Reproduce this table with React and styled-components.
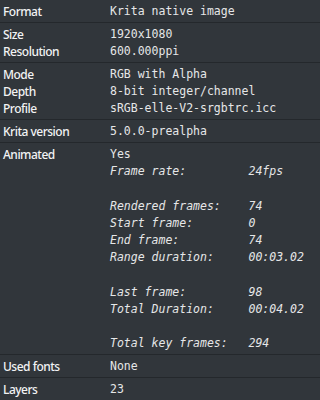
import React from "react"
import styled, { createGlobalStyle } from "styled-components"

const GlobalStyle = createGlobalStyle`
  html, body {
    margin: 0;
    padding: 0;
    background: #31363b;
  }
`

// animation details are laid out as a two-column monospace table
const animation = [
  ["Frame rate:", "24fps"],
  null,
  ["Rendered frames:", "74"],
  ["Start frame:", "0"],
  ["End frame:", "74"],
  ["Range duration:", "00:03.02"],
  null,
  ["Last frame:", "98"],
  ["Total Duration:", "00:04.02"],
  null,
  ["Total key frames:", "294"],
]

const groups = [
  [["Format", "Krita native image"]],
  [
    ["Size", "1920x1080"],
    ["Resolution", "600.000ppi"],
  ],
  [
    ["Mode", "RGB with Alpha"],
    ["Depth", "8-bit integer/channel"],
    ["Profile", "sRGB-elle-V2-srgbtrc.icc"],
  ],
  [["Krita version", "5.0.0-prealpha"]],
]

const tail = [
  [["Used fonts", "None"]],
  [["Layers", "23"]],
]

const Group = ({ rows }) => (
  <Section>
    {rows.map(([label, value]) => (
      <Row key={label}>
        <Label>{label}</Label>
        <Value>{value}</Value>
      </Row>
    ))}
  </Section>
)

const App = () => {
  return (
    <>
      <GlobalStyle />
      <Panel>
        {groups.map((rows, i) => (
          <Group key={i} rows={rows} />
        ))}

        <Section>
          <Row>
            <Label>Animated</Label>
            <AnimBlock>
              <Value>Yes</Value>
              {animation.map((item, i) =>
                item ? (
                  <AnimRow key={i}>
                    <AnimKey>{item[0]}</AnimKey>
                    <AnimVal>{item[1]}</AnimVal>
                  </AnimRow>
                ) : (
                  <Spacer key={i} />
                )
              )}
            </AnimBlock>
          </Row>
        </Section>

        {tail.map((rows, i) => (
          <Group key={i} rows={rows} />
        ))}
      </Panel>
    </>
  )
}

export default App

/* ── Styled Components ── */

const Panel = styled.div`
  width: 320px;
  height: 400px;
  overflow: hidden;
  background: #31363b;
  color: #eff0f1;
`

const Section = styled.div`
  padding: 3px 0 2px;
  border-bottom: 1px solid #24282c;
`

const Row = styled.div`
  display: flex;
  align-items: flex-start;
`

const Label = styled.div`
  width: 107px;
  padding-left: 3px;
  flex-shrink: 0;
  font-family: "Noto Sans", sans-serif;
  font-size: 12px;
  font-weight: 500;
  letter-spacing: -0.5px;
  line-height: 17px;
  color: #f2f3f4;
`

const Value = styled.div`
  font-family: "DejaVu Sans Mono", monospace;
  font-size: 11.5px;
  line-height: 17px;
  color: #e6e7e8;
  white-space: pre;
`

const AnimBlock = styled.div`
  display: flex;
  flex-direction: column;
  & > * {
    line-height: 17.2px;
  }
`

const AnimRow = styled.div`
  display: grid;
  grid-template-columns: 20ch auto;
  font-family: "DejaVu Sans Mono", monospace;
  font-style: italic;
  font-size: 11.5px;
  line-height: 17.2px;
  color: #e6e7e8;
`

const AnimKey = styled.span`
  white-space: pre;
`

const AnimVal = styled.span`
  white-space: pre;
`

const Spacer = styled.div`
  height: 17.2px;
`
